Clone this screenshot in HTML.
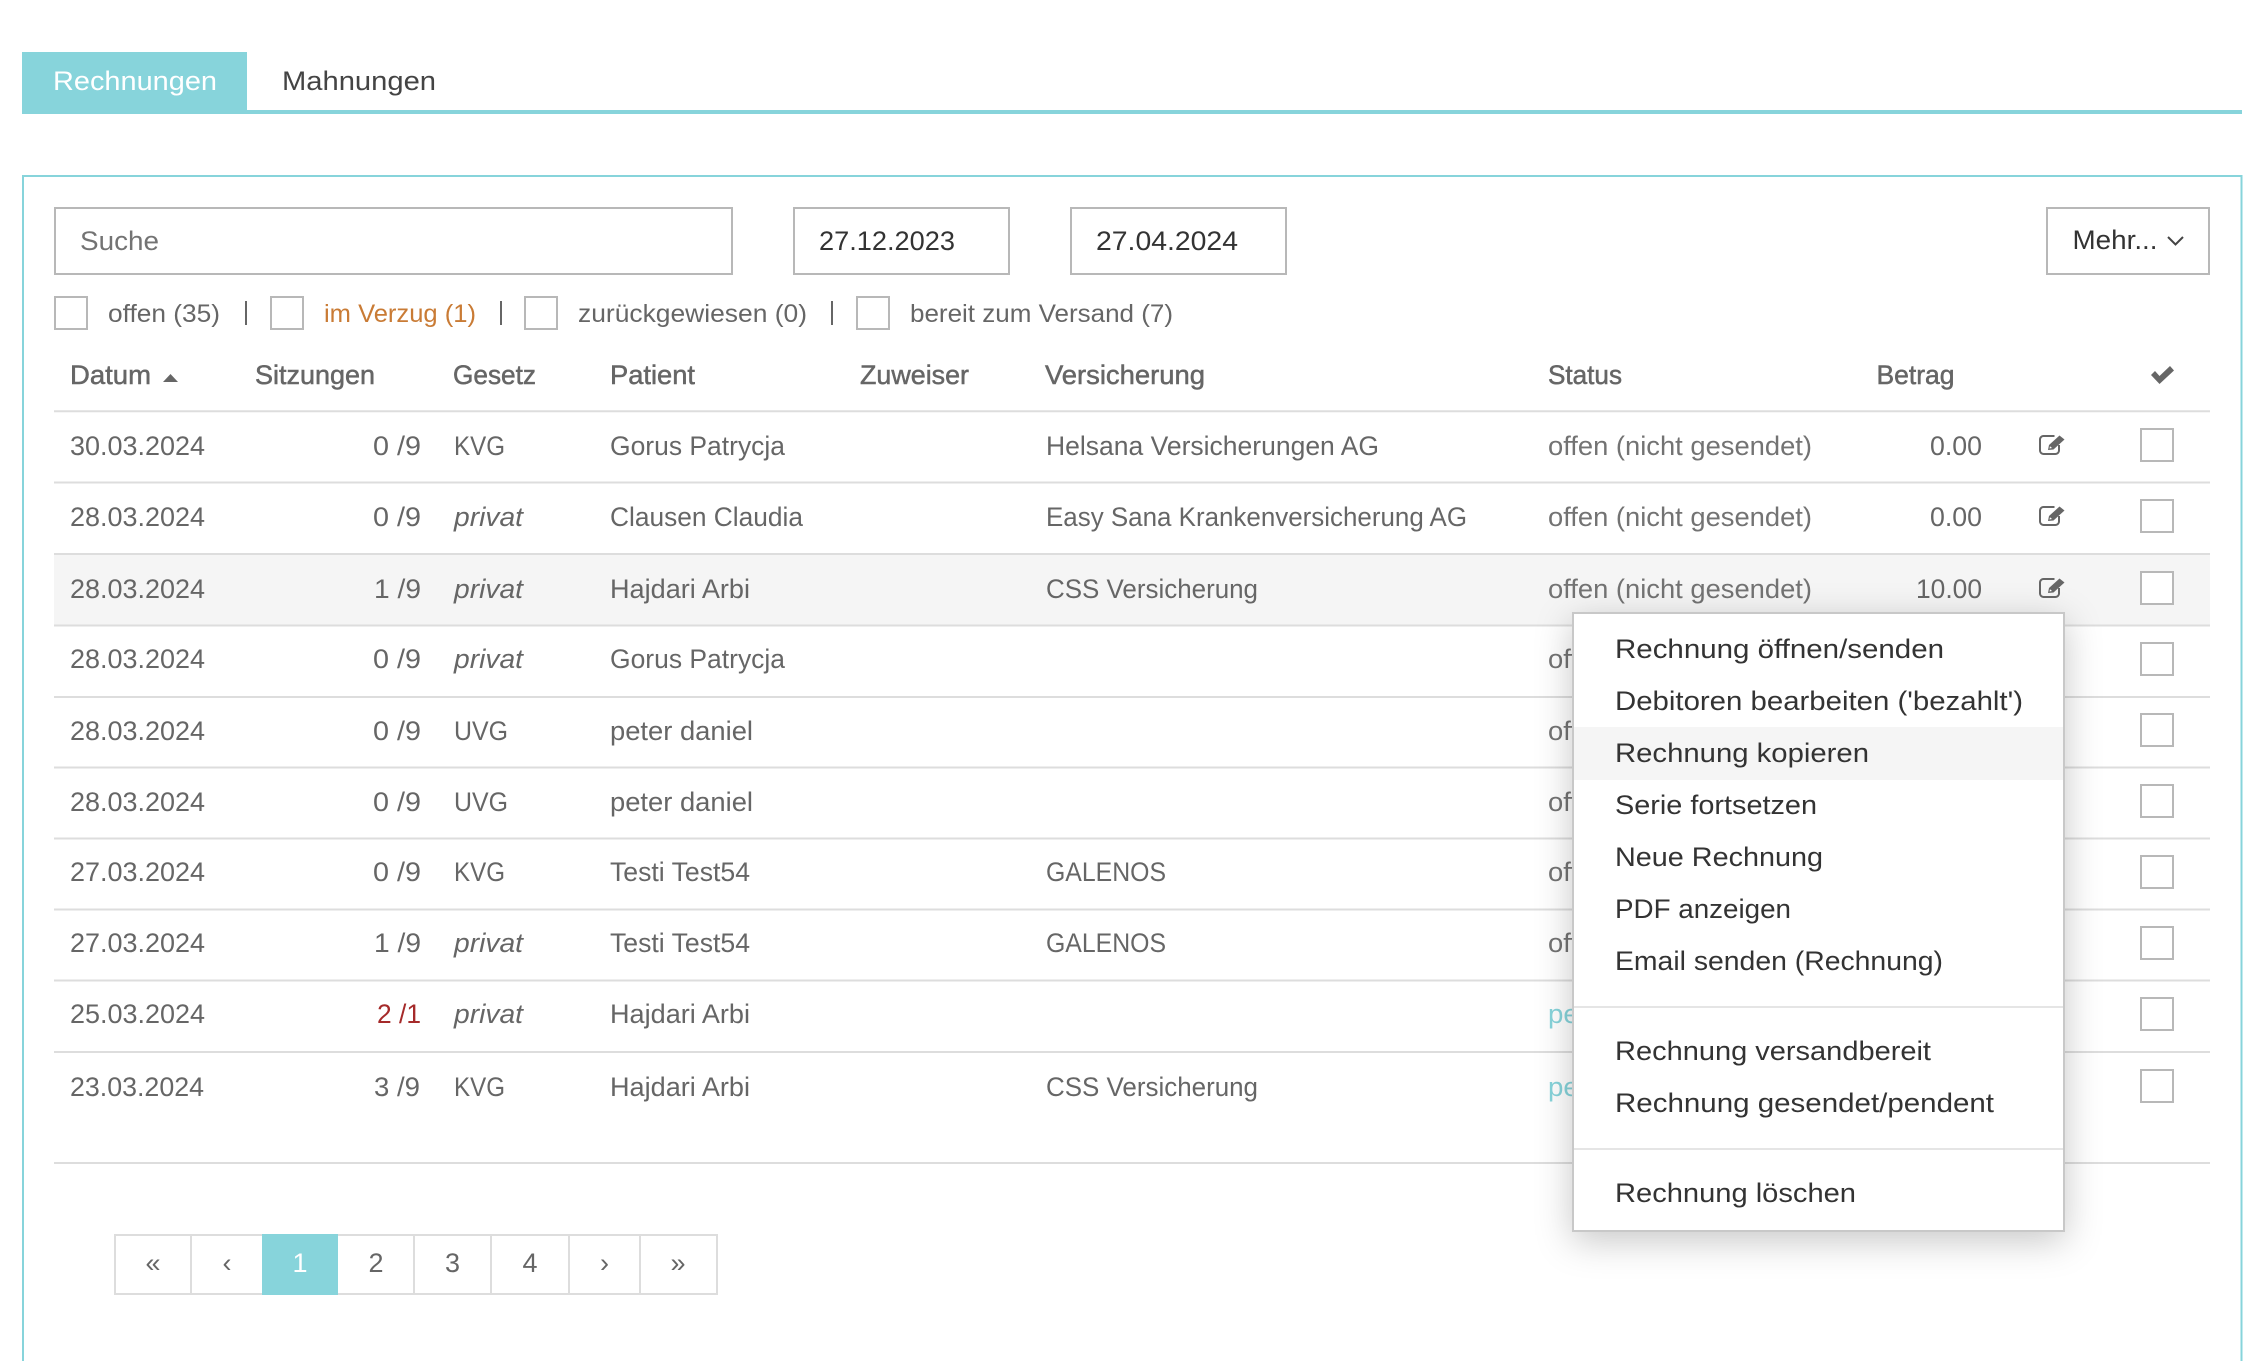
<!DOCTYPE html>
<html lang="de"><head><meta charset="utf-8"><title>Rechnungen</title>
<style>
html,body{margin:0;padding:0;background:#fff;width:2257px;height:1361px;overflow:hidden}
svg{display:block}
text{font-family:"Liberation Sans",sans-serif;font-size:27px;fill:#666;white-space:pre}
.h{stroke:#666;stroke-width:.5px}
.i{font-style:italic}
.m{fill:#333}
.f{font-size:25px}
.s{fill:#737373}
.c{text-anchor:middle}
.box{fill:#fff;stroke:#b8b8b8;stroke-width:2}
.cb{fill:#fff;stroke:#b8b8b8;stroke-width:2}
.l{stroke:#ddd;stroke-width:2}
.pl{stroke:#ddd;stroke-width:2}
</style></head><body>
<svg xmlns="http://www.w3.org/2000/svg" width="2257" height="1361" viewBox="0 0 2257 1361">
<defs>
<g id="e">
<path d="M15.5 2H5A3.5 3.5 0 0 0 1 5.500V16.500A3.500 3.500 0 0 0 4.500 20H16.500A3.500 3.500 0 0 0 20 16.500V11" fill="none" stroke="#666" stroke-width="2"/>
<path d="M9 16L10 11L20.500 1.500L25.500 5.500L14.500 15.500Z" fill="#666"/>
<path d="M10.500 14.500L11 12.200L13 14Z" fill="#fff"/>
</g>
</defs>

<rect x="22" y="52" width="225" height="62" fill="#87d4db"/>
<rect x="22" y="110" width="2220" height="4" fill="#87d4db"/>
<text x="53" y="90" textLength="164" lengthAdjust="spacingAndGlyphs" style="fill:#fff">Rechnungen</text>
<text x="282" y="90" textLength="154" lengthAdjust="spacingAndGlyphs" style="fill:#444">Mahnungen</text>

<rect x="23" y="176" width="2218.500" height="1200" fill="none" stroke="#87d4db" stroke-width="2"/>

<rect class="box" x="55" y="208" width="677" height="66"/>
<text class="s" x="80" y="250" textLength="79" lengthAdjust="spacingAndGlyphs">Suche</text>
<rect class="box" x="794" y="208" width="215" height="66"/>
<text x="819" y="250" textLength="136" lengthAdjust="spacingAndGlyphs" style="fill:#333">27.12.2023</text>
<rect class="box" x="1071" y="208" width="215" height="66"/>
<text x="1096" y="250" textLength="142" lengthAdjust="spacingAndGlyphs" style="fill:#333">27.04.2024</text>
<rect class="box" x="2047" y="208" width="162" height="66"/>
<text x="2072.500" y="249" textLength="85" lengthAdjust="spacingAndGlyphs" style="fill:#333">Mehr...</text>
<path d="M2168 237L2175.500 244.500L2183 237" fill="none" stroke="#444" stroke-width="2"/>

<rect class="cb" x="55" y="297" width="32" height="32"/>
<text class="f" x="108" y="322" textLength="112" lengthAdjust="spacingAndGlyphs">offen (35)</text>
<rect x="245" y="301" width="2" height="24" fill="#666"/>
<rect class="cb" x="271" y="297" width="32" height="32"/>
<text class="f" x="324" y="322" textLength="152" lengthAdjust="spacingAndGlyphs" style="fill:#c97b35">im Verzug (1)</text>
<rect x="500" y="301" width="2" height="24" fill="#666"/>
<rect class="cb" x="525" y="297" width="32" height="32"/>
<text class="f" x="578" y="322" textLength="229" lengthAdjust="spacingAndGlyphs">zurückgewiesen (0)</text>
<rect x="831" y="301" width="2" height="24" fill="#666"/>
<rect class="cb" x="857" y="297" width="32" height="32"/>
<text class="f" x="910" y="322" textLength="263" lengthAdjust="spacingAndGlyphs">bereit zum Versand (7)</text>

<text class="h" x="70" y="384" textLength="81" lengthAdjust="spacingAndGlyphs">Datum</text>
<path d="M163 382L170.500 374L178 382Z" fill="#666"/>
<text class="h" x="255" y="384" textLength="120" lengthAdjust="spacingAndGlyphs">Sitzungen</text>
<text class="h" x="453" y="384" textLength="83" lengthAdjust="spacingAndGlyphs">Gesetz</text>
<text class="h" x="610" y="384" textLength="85" lengthAdjust="spacingAndGlyphs">Patient</text>
<text class="h" x="860" y="384" textLength="109" lengthAdjust="spacingAndGlyphs">Zuweiser</text>
<text class="h" x="1045" y="384" textLength="160" lengthAdjust="spacingAndGlyphs">Versicherung</text>
<text class="h" x="1548" y="384" textLength="74" lengthAdjust="spacingAndGlyphs">Status</text>
<text class="h" x="1876.500" y="384" textLength="78" lengthAdjust="spacingAndGlyphs">Betrag</text>
<path d="M2151 375L2155 371L2159.500 376L2170 366L2174 370.500L2159.500 384Z" fill="#666"/>

<rect x="54" y="554" width="2156" height="71" fill="#f5f5f5"/>
<g>
<line class="l" x1="54" x2="2210" y1="411.300" y2="411.300"/>
<line class="l" x1="54" x2="2210" y1="482.500" y2="482.500"/>
<line class="l" x1="54" x2="2210" y1="554" y2="554"/>
<line class="l" x1="54" x2="2210" y1="625.500" y2="625.500"/>
<line class="l" x1="54" x2="2210" y1="697" y2="697"/>
<line class="l" x1="54" x2="2210" y1="767.500" y2="767.500"/>
<line class="l" x1="54" x2="2210" y1="838.500" y2="838.500"/>
<line class="l" x1="54" x2="2210" y1="909.500" y2="909.500"/>
<line class="l" x1="54" x2="2210" y1="980.500" y2="980.500"/>
<line class="l" x1="54" x2="2210" y1="1052" y2="1052"/>
<line class="l" x1="54" x2="2210" y1="1163" y2="1163"/>
</g>

<!-- row 1 -->
<text x="70" y="455" textLength="135" lengthAdjust="spacingAndGlyphs">30.03.2024</text>
<text x="373" y="455" textLength="48" lengthAdjust="spacingAndGlyphs">0 /9</text>
<text x="454" y="455" textLength="51" lengthAdjust="spacingAndGlyphs">KVG</text>
<text x="610" y="455" textLength="175" lengthAdjust="spacingAndGlyphs">Gorus Patrycja</text>
<text x="1046" y="455" textLength="333" lengthAdjust="spacingAndGlyphs">Helsana Versicherungen AG</text>
<text class="s" x="1548" y="455" textLength="264" lengthAdjust="spacingAndGlyphs">offen (nicht gesendet)</text>
<text x="1930" y="455" textLength="52" lengthAdjust="spacingAndGlyphs">0.00</text>
<use href="#e" x="2039" y="434"/><rect class="cb" x="2141" y="429" width="32" height="32"/>
<!-- row 2 -->
<text x="70" y="526" textLength="135" lengthAdjust="spacingAndGlyphs">28.03.2024</text>
<text x="373" y="526" textLength="48" lengthAdjust="spacingAndGlyphs">0 /9</text>
<text class="i" x="454" y="526" textLength="69" lengthAdjust="spacingAndGlyphs">privat</text>
<text x="610" y="526" textLength="193" lengthAdjust="spacingAndGlyphs">Clausen Claudia</text>
<text x="1046" y="526" textLength="421" lengthAdjust="spacingAndGlyphs">Easy Sana Krankenversicherung AG</text>
<text class="s" x="1548" y="526" textLength="264" lengthAdjust="spacingAndGlyphs">offen (nicht gesendet)</text>
<text x="1930" y="526" textLength="52" lengthAdjust="spacingAndGlyphs">0.00</text>
<use href="#e" x="2039" y="505"/><rect class="cb" x="2141" y="500" width="32" height="32"/>
<!-- row 3 -->
<text x="70" y="598" textLength="135" lengthAdjust="spacingAndGlyphs">28.03.2024</text>
<text x="374" y="598" textLength="47" lengthAdjust="spacingAndGlyphs">1 /9</text>
<text class="i" x="454" y="598" textLength="69" lengthAdjust="spacingAndGlyphs">privat</text>
<text x="610" y="598" textLength="140" lengthAdjust="spacingAndGlyphs">Hajdari Arbi</text>
<text x="1046" y="598" textLength="212" lengthAdjust="spacingAndGlyphs">CSS Versicherung</text>
<text class="s" x="1548" y="598" textLength="264" lengthAdjust="spacingAndGlyphs">offen (nicht gesendet)</text>
<text x="1916" y="598" textLength="66" lengthAdjust="spacingAndGlyphs">10.00</text>
<use href="#e" x="2039" y="577"/><rect class="cb" x="2141" y="572" width="32" height="32"/>
<!-- row 4 -->
<text x="70" y="668" textLength="135" lengthAdjust="spacingAndGlyphs">28.03.2024</text>
<text x="373" y="668" textLength="48" lengthAdjust="spacingAndGlyphs">0 /9</text>
<text class="i" x="454" y="668" textLength="69" lengthAdjust="spacingAndGlyphs">privat</text>
<text x="610" y="668" textLength="175" lengthAdjust="spacingAndGlyphs">Gorus Patrycja</text>
<text class="s" x="1548" y="668" textLength="264" lengthAdjust="spacingAndGlyphs">offen (nicht gesendet)</text>
<use href="#e" x="2039" y="648"/><rect class="cb" x="2141" y="643" width="32" height="32"/>
<!-- row 5 -->
<text x="70" y="740" textLength="135" lengthAdjust="spacingAndGlyphs">28.03.2024</text>
<text x="373" y="740" textLength="48" lengthAdjust="spacingAndGlyphs">0 /9</text>
<text x="454" y="740" textLength="54" lengthAdjust="spacingAndGlyphs">UVG</text>
<text x="610" y="740" textLength="143" lengthAdjust="spacingAndGlyphs">peter daniel</text>
<text class="s" x="1548" y="740" textLength="264" lengthAdjust="spacingAndGlyphs">offen (nicht gesendet)</text>
<use href="#e" x="2039" y="719"/><rect class="cb" x="2141" y="714" width="32" height="32"/>
<!-- row 6 -->
<text x="70" y="811" textLength="135" lengthAdjust="spacingAndGlyphs">28.03.2024</text>
<text x="373" y="811" textLength="48" lengthAdjust="spacingAndGlyphs">0 /9</text>
<text x="454" y="811" textLength="54" lengthAdjust="spacingAndGlyphs">UVG</text>
<text x="610" y="811" textLength="143" lengthAdjust="spacingAndGlyphs">peter daniel</text>
<text class="s" x="1548" y="811" textLength="264" lengthAdjust="spacingAndGlyphs">offen (nicht gesendet)</text>
<use href="#e" x="2039" y="790"/><rect class="cb" x="2141" y="785" width="32" height="32"/>
<!-- row 7 -->
<text x="70" y="881" textLength="135" lengthAdjust="spacingAndGlyphs">27.03.2024</text>
<text x="373" y="881" textLength="48" lengthAdjust="spacingAndGlyphs">0 /9</text>
<text x="454" y="881" textLength="51" lengthAdjust="spacingAndGlyphs">KVG</text>
<text x="610" y="881" textLength="140" lengthAdjust="spacingAndGlyphs">Testi Test54</text>
<text x="1046" y="881" textLength="120" lengthAdjust="spacingAndGlyphs">GALENOS</text>
<text class="s" x="1548" y="881" textLength="264" lengthAdjust="spacingAndGlyphs">offen (nicht gesendet)</text>
<use href="#e" x="2039" y="861"/><rect class="cb" x="2141" y="856" width="32" height="32"/>
<!-- row 8 -->
<text x="70" y="952" textLength="135" lengthAdjust="spacingAndGlyphs">27.03.2024</text>
<text x="374" y="952" textLength="47" lengthAdjust="spacingAndGlyphs">1 /9</text>
<text class="i" x="454" y="952" textLength="69" lengthAdjust="spacingAndGlyphs">privat</text>
<text x="610" y="952" textLength="140" lengthAdjust="spacingAndGlyphs">Testi Test54</text>
<text x="1046" y="952" textLength="120" lengthAdjust="spacingAndGlyphs">GALENOS</text>
<text class="s" x="1548" y="952" textLength="264" lengthAdjust="spacingAndGlyphs">offen (nicht gesendet)</text>
<use href="#e" x="2039" y="932"/><rect class="cb" x="2141" y="927" width="32" height="32"/>
<!-- row 9 -->
<text x="70" y="1023" textLength="135" lengthAdjust="spacingAndGlyphs">25.03.2024</text>
<text x="377" y="1023" textLength="44" lengthAdjust="spacingAndGlyphs" style="fill:#a52a2a">2 /1</text>
<text class="i" x="454" y="1023" textLength="69" lengthAdjust="spacingAndGlyphs">privat</text>
<text x="610" y="1023" textLength="140" lengthAdjust="spacingAndGlyphs">Hajdari Arbi</text>
<text x="1548" y="1023" textLength="100" lengthAdjust="spacingAndGlyphs" style="fill:#87d4db">pendent</text>
<use href="#e" x="2039" y="1003"/><rect class="cb" x="2141" y="998" width="32" height="32"/>
<!-- row 10 -->
<text x="70" y="1096" textLength="134" lengthAdjust="spacingAndGlyphs">23.03.2024</text>
<text x="374" y="1096" textLength="46" lengthAdjust="spacingAndGlyphs">3 /9</text>
<text x="454" y="1096" textLength="51" lengthAdjust="spacingAndGlyphs">KVG</text>
<text x="610" y="1096" textLength="140" lengthAdjust="spacingAndGlyphs">Hajdari Arbi</text>
<text x="1046" y="1096" textLength="212" lengthAdjust="spacingAndGlyphs">CSS Versicherung</text>
<text x="1548" y="1096" textLength="100" lengthAdjust="spacingAndGlyphs" style="fill:#87d4db">pendent</text>
<use href="#e" x="2039" y="1075"/><rect class="cb" x="2141" y="1070" width="32" height="32"/>

<!-- pagination -->
<rect x="115" y="1235" width="602" height="59" fill="#fff" stroke="#ddd" stroke-width="2"/>
<rect x="262" y="1234" width="76" height="61" fill="#87d4db"/>
<line class="pl" x1="191" x2="191" y1="1235" y2="1294"/>
<line class="pl" x1="414" x2="414" y1="1235" y2="1294"/>
<line class="pl" x1="491" x2="491" y1="1235" y2="1294"/>
<line class="pl" x1="569" x2="569" y1="1235" y2="1294"/>
<line class="pl" x1="640" x2="640" y1="1235" y2="1294"/>
<text class="c" x="153" y="1272">«</text>
<text class="c" x="227" y="1272">‹</text>
<text class="c" x="300" y="1272" style="fill:#fff">1</text>
<text class="c" x="376" y="1272">2</text>
<text class="c" x="452.500" y="1272">3</text>
<text class="c" x="530" y="1272">4</text>
<text class="c" x="604.500" y="1272">›</text>
<text class="c" x="678" y="1272">»</text>

<!-- context menu -->
<rect x="1573" y="613" width="491" height="618" fill="#fff" stroke="#c8c8c8" stroke-width="2" style="filter:drop-shadow(0 9px 18px rgba(0,0,0,.22))"/>
<rect x="1574" y="727" width="489" height="53" fill="#f5f5f5"/>
<rect x="1574" y="1006" width="489" height="2" fill="#e5e5e5"/>
<rect x="1574" y="1148" width="489" height="2" fill="#e5e5e5"/>
<text class="m" x="1615" y="658" textLength="329" lengthAdjust="spacingAndGlyphs">Rechnung öffnen/senden</text>
<text class="m" x="1615" y="710" textLength="408" lengthAdjust="spacingAndGlyphs">Debitoren bearbeiten ('bezahlt')</text>
<text class="m" x="1615" y="762" textLength="254" lengthAdjust="spacingAndGlyphs">Rechnung kopieren</text>
<text class="m" x="1615" y="814" textLength="202" lengthAdjust="spacingAndGlyphs">Serie fortsetzen</text>
<text class="m" x="1615" y="866" textLength="208" lengthAdjust="spacingAndGlyphs">Neue Rechnung</text>
<text class="m" x="1615" y="918" textLength="176" lengthAdjust="spacingAndGlyphs">PDF anzeigen</text>
<text class="m" x="1615" y="970" textLength="328" lengthAdjust="spacingAndGlyphs">Email senden (Rechnung)</text>
<text class="m" x="1615" y="1060" textLength="316" lengthAdjust="spacingAndGlyphs">Rechnung versandbereit</text>
<text class="m" x="1615" y="1112" textLength="379" lengthAdjust="spacingAndGlyphs">Rechnung gesendet/pendent</text>
<text class="m" x="1615" y="1202" textLength="241" lengthAdjust="spacingAndGlyphs">Rechnung löschen</text>
</svg>
</body></html>
